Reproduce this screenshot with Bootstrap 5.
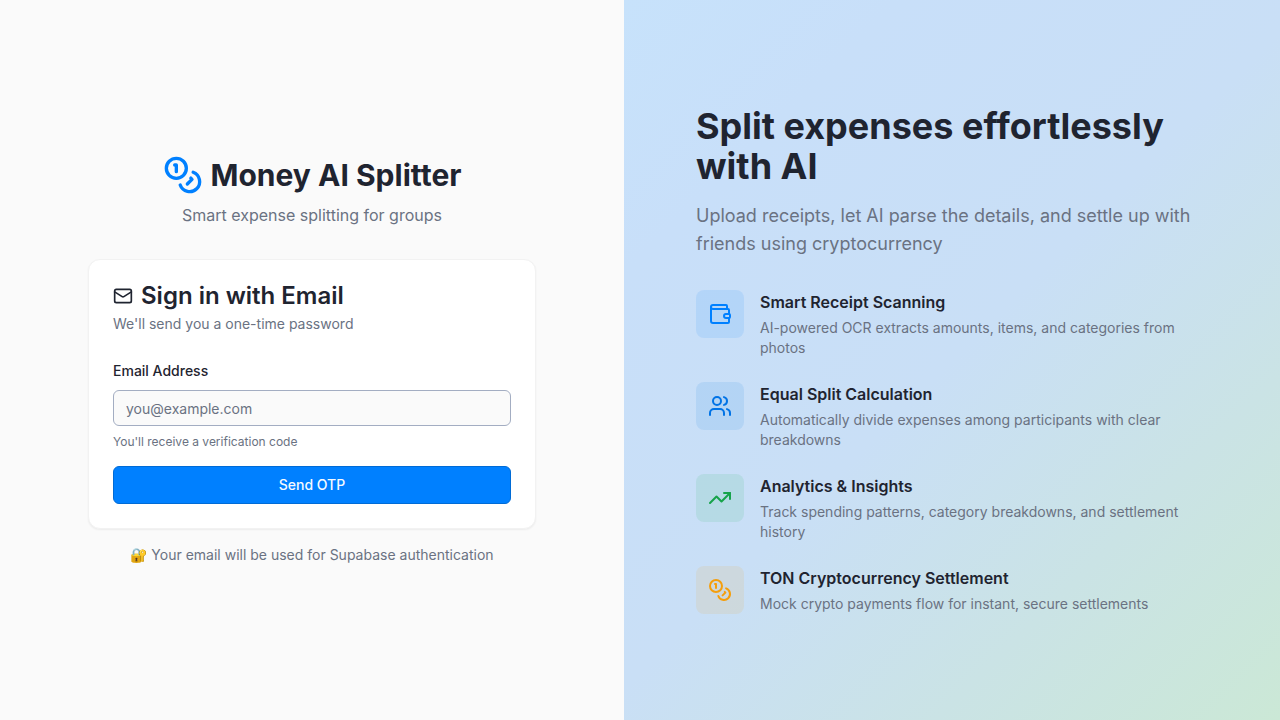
<!DOCTYPE html>
<html lang="en">
<head>
<meta charset="utf-8">
<meta name="viewport" content="width=device-width, initial-scale=1">
<title>Money AI Splitter</title>
<link href="https://cdn.jsdelivr.net/npm/bootstrap@5.3.0/dist/css/bootstrap.min.css" rel="stylesheet">
<style>
  :root { --ink: #1f2430; --soft: #6a7282; --brand: #0080ff; }
  body { font-family: Inter, "Liberation Sans", sans-serif; font-size: 14px; line-height: 20px; color: var(--ink); background: #fafafa; }
  svg { fill: none; stroke: currentColor; stroke-width: 2; stroke-linecap: round; stroke-linejoin: round; flex-shrink: 0; }
  .soft-text { color: var(--soft); }
  .brand-icon { width: 40px; height: 40px; color: var(--brand); }
  .panel { flex: 1 1 0; }
  .signin-panel { padding: 32px; }
  .signin-box { max-width: 448px; }
  .pitch-panel { padding: 48px; background: linear-gradient(135deg, #c7e2fb 0%, #c8dff9 20%, #c9dff6 50%, #cae3e5 75%, #cbe8d6 100%); }
  .pitch-box { max-width: 512px; }
  .app-name { font-size: 30px; line-height: 36px; font-weight: 700; }
  .tagline { font-size: 16px; line-height: 24px; }
  .signin-card { --bs-card-border-color: #f2f2f2; --bs-card-border-radius: 12px; --bs-card-inner-border-radius: 11px; color: inherit; box-shadow: 0 1px 2px rgba(0, 0, 0, .06); }
  .signin-title { font-size: 24px; line-height: 24px; font-weight: 600; margin-bottom: 6px; }
  .mail-icon { width: 20px; height: 20px; }
  .form-label { font-weight: 500; line-height: 26px; margin-bottom: 6px; }
  .form-control { height: 36px; padding: 8px 12px; font-size: 14px; line-height: 20px; border: 1px solid #a3adc2; border-radius: 6px; background: #fafafa; color: var(--ink); }
  .form-control::placeholder { color: var(--soft); }
  .form-text { font-size: 12px; line-height: 16px; color: var(--soft); margin-top: 8px; }
  .btn-send { --bs-btn-color: #f5faff; --bs-btn-bg: var(--brand); --bs-btn-border-color: #006bd6; --bs-btn-hover-color: #fff; --bs-btn-hover-bg: #0074e8; --bs-btn-font-size: 14px; --bs-btn-line-height: 20px; --bs-btn-font-weight: 500; --bs-btn-padding-y: 8px; --bs-btn-border-radius: 6px; }
  .headline { font-size: 36px; line-height: 40px; font-weight: 700; }
  .pitch { font-size: 18px; line-height: 28px; margin-bottom: 32px; }
  .feature-name { font-size: 16px; line-height: 24px; font-weight: 600; }
  .feature-icon { width: 48px; height: 48px; border-radius: 8px; }
  .feature-icon svg { width: 24px; height: 24px; }
  .tone-brand { color: #0080ff; background: rgba(0, 128, 255, .1); }
  .tone-blue { color: #0073e6; background: rgba(0, 122, 230, .1); }
  .tone-green { color: #16a34a; background: rgba(22, 180, 74, .1); }
  .tone-amber { color: #f59e0b; background: rgba(245, 158, 11, .1); }
</style>
</head>
<body>
<svg class="d-none">
  <symbol id="coins" viewBox="0 0 24 24">
    <circle cx="8" cy="8" r="6"/><path d="M18.09 10.37A6 6 0 1 1 10.34 18"/><path d="M7 6h1v4"/><path d="m16.71 13.88.7.71-2.82 2.82"/>
  </symbol>
</svg>
<main class="d-flex min-vh-100">
  <section class="panel signin-panel d-flex align-items-center justify-content-center">
    <div class="signin-box w-100">
      <header class="text-center mb-4 pb-2">
        <div class="d-flex align-items-center justify-content-center gap-2 mb-2">
          <svg class="brand-icon" aria-hidden="true"><use href="#coins"/></svg>
          <h1 class="app-name mb-0">Money AI Splitter</h1>
        </div>
        <p class="tagline soft-text mb-0">Smart expense splitting for groups</p>
      </header>
      <div class="card signin-card">
        <div class="card-body p-4">
          <h2 class="signin-title d-flex align-items-center gap-2">
            <svg class="mail-icon" viewBox="0 0 24 24" aria-hidden="true"><rect width="20" height="16" x="2" y="4" rx="2"/><path d="m22 7-8.97 5.7a1.94 1.94 0 0 1-2.06 0L2 7"/></svg>
            Sign in with Email
          </h2>
          <p class="soft-text mb-4">We'll send you a one-time password</p>
          <form>
            <div class="mb-3">
              <label class="form-label d-block" for="email">Email Address</label>
              <input class="form-control" type="email" id="email" placeholder="you@example.com" aria-describedby="email-help">
              <div class="form-text" id="email-help">You'll receive a verification code</div>
            </div>
            <button class="btn btn-send w-100" type="submit">Send OTP</button>
          </form>
        </div>
      </div>
      <p class="soft-text text-center mt-3 mb-0">🔐 Your email will be used for Supabase authentication</p>
    </div>
  </section>
  <section class="panel pitch-panel d-flex align-items-center justify-content-center">
    <div class="pitch-box w-100">
      <h2 class="headline mb-3">Split expenses effortlessly with AI</h2>
      <p class="pitch soft-text">Upload receipts, let AI parse the details, and settle up with friends using cryptocurrency</p>
      <div class="d-flex flex-column gap-4">
        <div class="d-flex align-items-start gap-3">
          <div class="feature-icon tone-brand d-flex align-items-center justify-content-center flex-shrink-0">
            <svg viewBox="0 0 24 24" aria-hidden="true"><path d="M19 7V4a1 1 0 0 0-1-1H5a2 2 0 0 0 0 4h15a1 1 0 0 1 1 1v4h-3a2 2 0 0 0 0 4h3a1 1 0 0 0 1-1v-2a1 1 0 0 0-1-1"/><path d="M3 5v14a2 2 0 0 0 2 2h15a1 1 0 0 0 1-1v-4"/></svg>
          </div>
          <div>
            <h3 class="feature-name mb-1">Smart Receipt Scanning</h3>
            <p class="soft-text mb-0">AI-powered OCR extracts amounts, items, and categories from photos</p>
          </div>
        </div>
        <div class="d-flex align-items-start gap-3">
          <div class="feature-icon tone-blue d-flex align-items-center justify-content-center flex-shrink-0">
            <svg viewBox="0 0 24 24" aria-hidden="true"><path d="M16 21v-2a4 4 0 0 0-4-4H6a4 4 0 0 0-4 4v2"/><circle cx="9" cy="7" r="4"/><path d="M22 21v-2a4 4 0 0 0-3-3.87"/><path d="M16 3.13a4 4 0 0 1 0 7.75"/></svg>
          </div>
          <div>
            <h3 class="feature-name mb-1">Equal Split Calculation</h3>
            <p class="soft-text mb-0">Automatically divide expenses among participants with clear breakdowns</p>
          </div>
        </div>
        <div class="d-flex align-items-start gap-3">
          <div class="feature-icon tone-green d-flex align-items-center justify-content-center flex-shrink-0">
            <svg viewBox="0 0 24 24" aria-hidden="true"><polyline points="22 7 13.5 15.5 8.5 10.5 2 17"/><polyline points="16 7 22 7 22 13"/></svg>
          </div>
          <div>
            <h3 class="feature-name mb-1">Analytics &amp; Insights</h3>
            <p class="soft-text mb-0">Track spending patterns, category breakdowns, and settlement history</p>
          </div>
        </div>
        <div class="d-flex align-items-start gap-3">
          <div class="feature-icon tone-amber d-flex align-items-center justify-content-center flex-shrink-0">
            <svg aria-hidden="true"><use href="#coins"/></svg>
          </div>
          <div>
            <h3 class="feature-name mb-1">TON Cryptocurrency Settlement</h3>
            <p class="soft-text mb-0">Mock crypto payments flow for instant, secure settlements</p>
          </div>
        </div>
      </div>
    </div>
  </section>
</main>
<script src="https://cdn.jsdelivr.net/npm/bootstrap@5.3.0/dist/js/bootstrap.bundle.min.js"></script>
</body>
</html>
